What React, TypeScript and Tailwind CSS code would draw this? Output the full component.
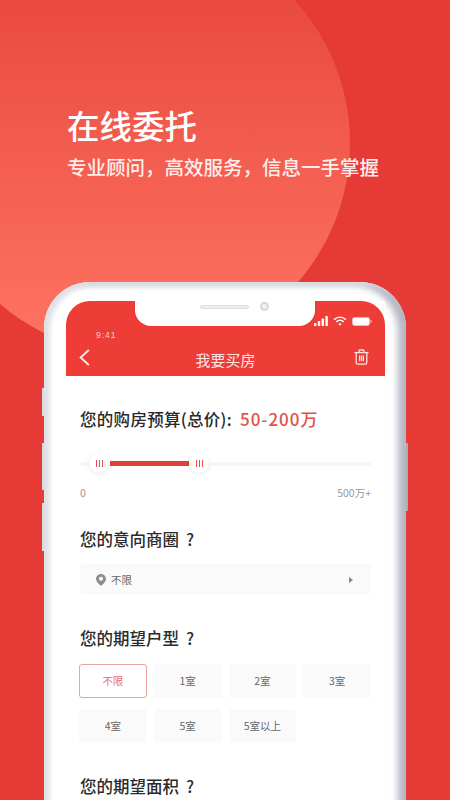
import React from 'react';

const font = { cjk: 'font-["Noto_Sans_CJK_SC","Noto_Sans",sans-serif]' };

const rooms = ['不限', '1室', '2室', '3室', '4室', '5室', '5室以上'];

const Ticks = () => (
  <div className="flex gap-[2px]">
    <span className="w-px h-[7px] bg-[#e2504a]" />
    <span className="w-px h-[7px] bg-[#e2504a]" />
    <span className="w-px h-[7px] bg-[#e2504a]" />
  </div>
);

const StatusIcons = () => (
  <div className="flex self-start items-center gap-[4px] mt-[15px]">
    <svg width="15" height="10" viewBox="0 0 15 10" fill="white">
      <rect x="0" y="7" width="2.4" height="3" rx="0.5" />
      <rect x="3.8" y="5" width="2.4" height="5" rx="0.5" />
      <rect x="7.6" y="2.5" width="2.4" height="7.5" rx="0.5" />
      <rect x="11.4" y="0" width="2.4" height="10" rx="0.5" />
    </svg>
    <svg width="14" height="10" viewBox="0 0 14 10" fill="none" stroke="white" strokeWidth="1.5">
      <path d="M1 3.6C4.6 0.4 9.4 0.4 13 3.6" />
      <path d="M3.2 5.9C5.5 3.9 8.5 3.9 10.8 5.9" />
      <path d="M7 9.6L5.3 7.9C6.3 7.1 7.7 7.1 8.7 7.9Z" fill="white" stroke="none" />
    </svg>
    <svg width="20" height="9" viewBox="0 0 20 9" className="ml-[1px]">
      <rect x="0.5" y="0.5" width="17" height="8" rx="2" fill="white" stroke="#f8b5b0" />
      <rect x="18.4" y="3" width="1.2" height="3" rx="0.5" fill="#f8b5b0" />
    </svg>
  </div>
);

const BackIcon = () => (
  <svg width="11" height="17" viewBox="0 0 11 17" fill="none" stroke="#fdeeec" strokeWidth="1.8">
    <path d="M9.8 1L1.6 8.5L9.8 16" />
  </svg>
);

const TrashIcon = () => (
  <svg width="15" height="16" viewBox="0 0 15 16" fill="none" stroke="#fbe3e1" strokeWidth="1.3">
    <path d="M0.5 3.6H14.5" />
    <path d="M4.8 3.4L5.4 1H9.6L10.2 3.4" />
    <path d="M2.2 3.6V13.6C2.2 14.5 2.9 15.2 3.8 15.2H11.2C12.1 15.2 12.8 14.5 12.8 13.6V3.6" />
    <path d="M5.6 6.4V12.2M7.5 6.4V12.2M9.4 6.4V12.2" />
  </svg>
);

const Question = ({ children }: { children: React.ReactNode }) => (
  <h3 className="text-[16.5px] leading-[26px] font-medium text-[#2a2a2a] whitespace-nowrap">
    {children}
    <span className="ml-[7px]">?</span>
  </h3>
);

export default function App() {
  return (
    <div className={`relative w-[450px] h-[800px] overflow-hidden bg-[#e63a37] ${font.cjk}`}>
      {/* background circle */}
      <div className="absolute left-[-74px] top-[-69px] w-[424px] h-[424px] rounded-full bg-gradient-to-b from-[#e5403a] to-[#ff7462]" />

      <div className="relative">
        <div className="pl-[67px] pt-[102px] text-white">
          <h1 className="text-[32.5px] leading-[46px] font-medium">在线委托</h1>
          <p className="text-[19.5px] leading-[28px] mt-[5px] font-medium whitespace-nowrap text-[#fdeeec]">
            专业顾问，高效服务，信息一手掌握
          </p>
        </div>

        {/* phone */}
        <div className="relative mt-[101px] ml-[44px] w-[362px] h-[600px] rounded-t-[46px] bg-white pt-[19px] pl-[22px] pr-[21px] shadow-[inset_6px_3px_5px_#dfe1e7,inset_-8px_3px_7px_#b4b6c3]">
          <div className="absolute left-[-2px] top-[106px] w-[2px] h-[28px] bg-[#d9dbe2]" />
          <div className="absolute left-[-2px] top-[161px] w-[2px] h-[47px] bg-[#d9dbe2]" />
          <div className="absolute left-[-2px] top-[221px] w-[2px] h-[48px] bg-[#d9dbe2]" />
          <div className="absolute right-[-2px] top-[161px] w-[2px] h-[68px] bg-[#a9abba]" />

          <div className="bg-white h-full">
            {/* header */}
            <div className="relative h-[75px] bg-[#ee3c36] rounded-t-[24px] text-white">
              <div className="absolute left-[69px] top-0 w-[180px] h-[25px] bg-white rounded-b-[16px]">
                <div className="absolute left-[65px] top-[4px] w-[49px] h-[4px] rounded-full bg-[#eceef0] border border-[#dcdee2]" />
                <div className="absolute left-[125px] top-[1px] w-[9px] h-[9px] rounded-full bg-[#eef0f2] border-2 border-[#d5d7db]" />
              </div>
              <div className="flex justify-between pl-[30px] pr-[13px] h-[42px]">
                <span className="text-[8.5px] leading-[10px] mt-[29px] tracking-[1px] text-[#f9cfcc] font-['Liberation_Sans',sans-serif]">9:41</span>
                <StatusIcons />
              </div>
              <div className="flex items-start justify-between pl-[13px] pr-[16px]">
                <div className="mt-[6px]">
                  <BackIcon />
                </div>
                <span className="text-[15px] leading-[22px] mt-[6px] ml-[7px] text-[#fde6e4]">我要买房</span>
                <div className="mt-[6px]">
                  <TrashIcon />
                </div>
              </div>
            </div>

            {/* form */}
            <div className="px-[14px] pt-[30px]">
              <div className="flex items-center text-[16.5px] leading-[26px] font-medium text-[#2a2a2a] whitespace-nowrap">
                <span className="tracking-[0.3px]">您的购房预算(总价):</span>
                <span className="text-[17px] tracking-[1px] text-[#e2504a] ml-[8px]">50-200万</span>
              </div>

              <div className="relative h-[4px] mt-[30px] bg-[#f6f6f6] rounded-full">
                <div className="absolute left-[30px] top-[-1px] w-[79px] h-[5px] bg-[#e33f3c]" />
                <div className="absolute left-[9px] top-[-9px] w-[20px] h-[20px] rounded-full bg-white shadow-[0_1px_4px_rgba(0,0,0,0.1)] flex items-center justify-center">
                  <Ticks />
                </div>
                <div className="absolute left-[109px] top-[-9px] w-[20px] h-[20px] rounded-full bg-white shadow-[0_1px_4px_rgba(0,0,0,0.1)] flex items-center justify-center">
                  <Ticks />
                </div>
              </div>

              <div className="flex justify-between mt-[20px] text-[10.5px] leading-[14px] text-[#999]">
                <span>0</span>
                <span>500万+</span>
              </div>

              <div className="mt-[26px]">
                <Question>您的意向商圈</Question>
              </div>
              <div className="flex items-center justify-between h-[31px] mt-[12px] rounded-[4px] bg-[#fafafa] pl-[16px] pr-[18px]">
                <div className="flex items-center gap-[5px]">
                  <svg width="10" height="12" viewBox="0 0 10 12">
                    <path d="M5 0C2.2 0 0 2.2 0 5C0 8 5 12 5 12C5 12 10 8 10 5C10 2.2 7.8 0 5 0Z" fill="#8a8f94" />
                    <circle cx="5" cy="4.8" r="2" fill="#fafafa" />
                  </svg>
                  <span className="text-[10.5px] text-[#666]">不限</span>
                </div>
                <span className="w-0 h-0 border-y-[3px] border-y-transparent border-l-[4px] border-l-[#888]" />
              </div>

              <div className="mt-[30px]">
                <Question>您的期望户型</Question>
              </div>
              <div className="grid grid-cols-4 gap-x-[7px] gap-y-[11px] mt-[13px] ml-[-1px]">
                {rooms.map((room, idx) => (
                  <div
                    key={idx}
                    className={`h-[34px] rounded-[3px] flex items-center justify-center text-[10.5px] ${
                      idx === 0
                        ? 'border border-[#e8a49e] text-[#ec6a5f] bg-white'
                        : 'bg-[#fafafa] text-[#666]'
                    }`}
                  >
                    {room}
                  </div>
                ))}
              </div>

              <div className="mt-[30px]">
                <Question>您的期望面积</Question>
              </div>
            </div>
          </div>
        </div>
      </div>
    </div>
  );
}
